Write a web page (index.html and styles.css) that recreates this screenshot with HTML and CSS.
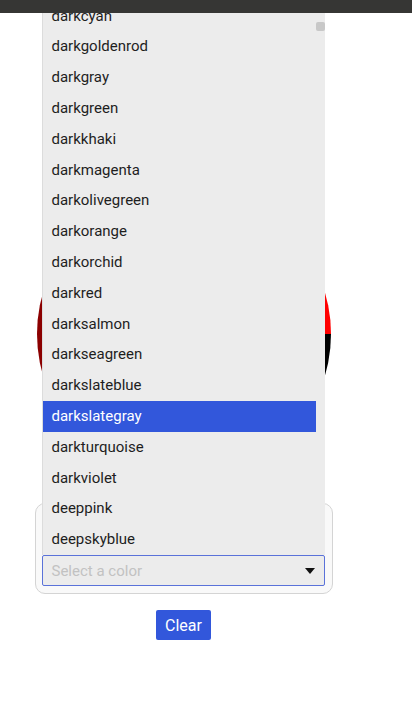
FILE: index.html
```html
<!DOCTYPE html>
<html>
<head>
<meta charset="utf-8">
<link rel="stylesheet" href="styles.css">
</head>
<body>
<div class="topbar"></div>
<div class="page">
  <div class="wheel"></div>
  <div class="panel">
    <div class="spacer"></div>
    <div class="select-wrap">
      <div class="select">
        <span class="placeholder">Select a color</span>
        <svg class="caret" width="10" height="6" viewBox="0 0 10 6"><path d="M0 0H10L5 6Z" fill="#111"/></svg>
      </div>
      <div class="menu">
        <div class="options">
          <div class="opt">darkcyan</div>
          <div class="opt">darkgoldenrod</div>
          <div class="opt">darkgray</div>
          <div class="opt">darkgreen</div>
          <div class="opt">darkkhaki</div>
          <div class="opt">darkmagenta</div>
          <div class="opt">darkolivegreen</div>
          <div class="opt">darkorange</div>
          <div class="opt">darkorchid</div>
          <div class="opt">darkred</div>
          <div class="opt">darksalmon</div>
          <div class="opt">darkseagreen</div>
          <div class="opt">darkslateblue</div>
          <div class="opt active">darkslategray</div>
          <div class="opt">darkturquoise</div>
          <div class="opt">darkviolet</div>
          <div class="opt">deeppink</div>
          <div class="opt">deepskyblue</div>
        </div>
        <div class="track"><div class="thumb"></div></div>
      </div>
    </div>
  </div>
  <button class="clear">Clear</button>
</div>
</body>
</html>
```
FILE: styles.css
```css
html, body {
  margin: 0;
  padding: 0;
  background: #ffffff;
  font-family: Roboto, "Liberation Sans", sans-serif;
}
.topbar {
  position: fixed;
  top: 0;
  left: 0;
  right: 0;
  height: 13px;
  background: #363634;
  z-index: 10;
}
.page {
  width: 367px;
  display: flex;
  flex-direction: column;
  align-items: center;
}
.wheel {
  margin-top: 187px;
  width: 294px;
  height: 294px;
  border-radius: 50%;
  background: conic-gradient(#ff0000 0deg 90deg, #000000 90deg 180deg, #8b0000 180deg 360deg);
}
.panel {
  margin-top: 22px;
  width: 298px;
  box-sizing: border-box;
  padding: 7px 7px 7px 6px;
  border: 1px solid #d4d4d4;
  border-radius: 10px;
  background: #f9f9f9;
}
.spacer {
  height: 44px;
}
.select-wrap {
  position: relative;
}
.select {
  box-sizing: border-box;
  width: 283px;
  height: 31px;
  border: 1px solid #5a72d9;
  border-radius: 2px;
  background: #ececec;
  display: flex;
  align-items: center;
  justify-content: space-between;
  padding: 0 9px 0 9px;
}
.placeholder {
  font-size: 15px;
  color: #c2c2c2;
}
.caret {
  display: block;
}
.menu {
  position: absolute;
  left: 0;
  bottom: 100%;
  width: 283px;
  height: 555px;
  box-sizing: border-box;
  background: #ececec;
  border-left: 1px solid #dcdcdc;
  display: flex;
  overflow: hidden;
}
.options {
  flex: 1;
  display: flex;
  flex-direction: column;
  justify-content: flex-end;
}
.opt {
  height: 30.8px;
  line-height: 30.8px;
  padding: 0 9px;
  font-size: 15px;
  color: #1e1e1e;
  white-space: nowrap;
}
.opt.active {
  background: #3257db;
  color: #ffffff;
}
.track {
  width: 9px;
  position: relative;
}
.thumb {
  position: absolute;
  top: 22px;
  left: 0;
  width: 9px;
  height: 9px;
  border-radius: 2px;
  background: #c8c8c8;
}
.clear {
  margin-top: 16px;
  width: 55px;
  height: 30px;
  border: none;
  border-radius: 2px;
  background: #3257db;
  color: #ffffff;
  font-family: Roboto, "Liberation Sans", sans-serif;
  font-size: 16px;
  padding: 0;
}
```
